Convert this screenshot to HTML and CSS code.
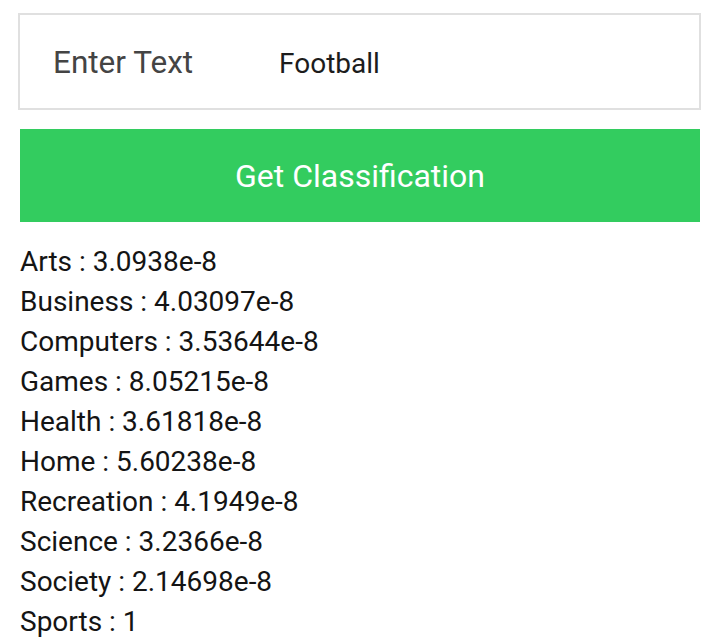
FILE: index.html
```html
<!DOCTYPE html>
<html>
<head>
<meta charset="utf-8">
<link rel="stylesheet" href="styles.css">
</head>
<body>
<div class="page">
  <div class="input-row">
    <span class="label">Enter Text</span>
    <span class="value">Football</span>
  </div>
  <div class="button">Get Classification</div>
  <ul class="results">
    <li>Arts : 3.0938e-8</li>
    <li>Business : 4.03097e-8</li>
    <li>Computers : 3.53644e-8</li>
    <li>Games : 8.05215e-8</li>
    <li>Health : 3.61818e-8</li>
    <li>Home : 5.60238e-8</li>
    <li>Recreation : 4.1949e-8</li>
    <li>Science : 3.2366e-8</li>
    <li>Society : 2.14698e-8</li>
    <li>Sports : 1</li>
  </ul>
</div>
</body>
</html>
```
FILE: styles.css
```css
html, body {
  margin: 0;
  padding: 0;
  background: #ffffff;
}
.page {
  font-family: Roboto, "Noto Sans", sans-serif;
  padding-top: 13px;
}
.input-row {
  margin-left: 18px;
  width: 683px;
  height: 97px;
  box-sizing: border-box;
  border: 2px solid #e0e0e0;
  display: flex;
  align-items: center;
}
.label {
  margin-left: 33px;
  font-size: 31.5px;
  color: #444444;
  width: 226px;
  padding-top: 1px;
}
.value {
  font-size: 28px;
  color: #1c1c1c;
  padding-top: 3px;
}
.button {
  margin: 19px 0 0 20px;
  width: 680px;
  height: 93px;
  background: #33cc5f;
  color: #ffffff;
  font-size: 32px;
  display: flex;
  align-items: center;
  justify-content: center;
}
.results {
  list-style: none;
  margin: 20px 0 0 20px;
  padding: 0;
  font-size: 28px;
  line-height: 40px;
  color: #141414;
}
```
